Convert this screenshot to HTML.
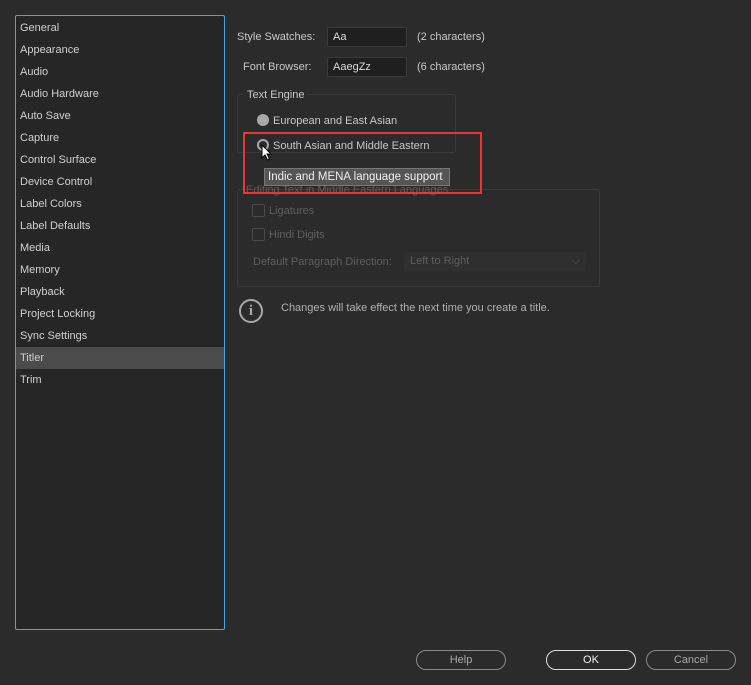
<!DOCTYPE html>
<html><head><style>
body{margin:0;width:751px;height:685px;background:#2b2b2b;font-family:"Liberation Sans","DejaVu Sans",sans-serif;font-size:11px;color:#c8c8c8;position:relative;overflow:hidden}
.abs{position:absolute;white-space:nowrap}
#list{left:15px;top:15px;width:208px;height:613px;border:1px solid #4aa3dc;border-radius:2px;background:#262626}
#list div{height:22px;line-height:22px;padding-left:4px;color:#d0d0d0;font-size:11px}
#list .sel{background:#4b4b4b}
.inp{background:#1f1f1f;border:1px solid #3a3a3a;border-radius:2px;height:18px;line-height:18px;padding-left:5px;color:#d8d8d8;width:73px}
.btn{border:1px solid #8a8a8a;border-radius:10px;height:18px;line-height:19px;text-align:center;color:#a8a8a8;font-size:11px}
.grp{border:1px solid #3a3a3a;border-radius:3px}
.dis{color:#5e5e5e}
</style></head><body>
<div id="list" class="abs">
<div style="margin-top:1px">General</div><div>Appearance</div><div>Audio</div><div>Audio Hardware</div><div>Auto Save</div><div>Capture</div><div>Control Surface</div><div>Device Control</div><div>Label Colors</div><div>Label Defaults</div><div>Media</div><div>Memory</div><div>Playback</div><div>Project Locking</div><div>Sync Settings</div><div class="sel">Titler</div><div>Trim</div>
</div>
<div class="abs" style="left:237px;top:31px">Style Swatches:</div>
<div class="abs inp" style="left:327px;top:27px">Aa</div>
<div class="abs" style="left:417px;top:31px">(2 characters)</div>
<div class="abs" style="left:243px;top:61px">Font Browser:</div>
<div class="abs inp" style="left:327px;top:57px">AaegZz</div>
<div class="abs" style="left:417px;top:61px">(6 characters)</div>
<div class="abs grp" style="left:237px;top:94px;width:217px;height:57px"></div>
<div class="abs" style="left:244px;top:89px;background:#2b2b2b;padding:0 3px">Text Engine</div>
<div class="abs" style="left:257px;top:114px;width:12px;height:12px;border-radius:50%;background:#a8a8a8"></div>
<div class="abs" style="left:273px;top:115px">European and East Asian</div>
<div class="abs" style="left:257px;top:139px;width:8px;height:8px;border-radius:50%;border:2px solid #a8a8a8"></div>
<div class="abs" style="left:273px;top:140px">South Asian and Middle Eastern</div>
<svg class="abs" style="left:261px;top:144px" width="12" height="18"><path d="M1 1 L1 14 L4 11 L6.5 16 L8.5 15 L6 10 L10 10 Z" fill="#fff" stroke="#000" stroke-width="1"/></svg>
<div class="abs grp" style="left:237px;top:189px;width:361px;height:96px"></div>
<div class="abs dis" style="left:246px;top:184px">Editing Text in Middle Eastern Languages</div>
<div class="abs" style="left:252px;top:204px;width:11px;height:11px;border:1px solid #4a4a4a;border-radius:2px"></div>
<div class="abs dis" style="left:269px;top:205px">Ligatures</div>
<div class="abs" style="left:252px;top:228px;width:11px;height:11px;border:1px solid #4a4a4a;border-radius:2px"></div>
<div class="abs dis" style="left:269px;top:229px">Hindi Digits</div>
<div class="abs dis" style="left:253px;top:256px">Default Paragraph Direction:</div>
<div class="abs dis" style="left:404px;top:252px;width:176px;height:19px;line-height:19px;background:#2f2f2f;padding-left:6px">Left to Right<span style="position:absolute;right:6px">⌵</span></div>
<div class="abs" style="left:239px;top:299px;width:24px;height:24px;border:2px solid #a8a8a8;border-radius:50%;box-sizing:border-box;text-align:center;font:bold 15px/20px 'Liberation Serif',serif;color:#a8a8a8">i</div>
<div class="abs" style="left:281px;top:302px;color:#b0b0b0">Changes will take effect the next time you create a title.</div>
<div class="abs" style="left:243px;top:132px;width:239px;height:62px;border:2px solid #e8363c;box-sizing:border-box"></div>
<div class="abs" style="left:264px;top:168px;width:186px;height:18px;line-height:17px;background:#555;border:1px solid #777;color:#f0f0f0;font-size:11.5px;padding-left:3px;box-sizing:border-box;overflow:hidden">Indic and MENA language support</div>
<div class="abs btn" style="left:416px;top:650px;width:88px">Help</div>
<div class="abs btn" style="left:546px;top:650px;width:88px;border-color:#ddd;color:#f0f0f0">OK</div>
<div class="abs btn" style="left:646px;top:650px;width:88px">Cancel</div>
</body></html>
